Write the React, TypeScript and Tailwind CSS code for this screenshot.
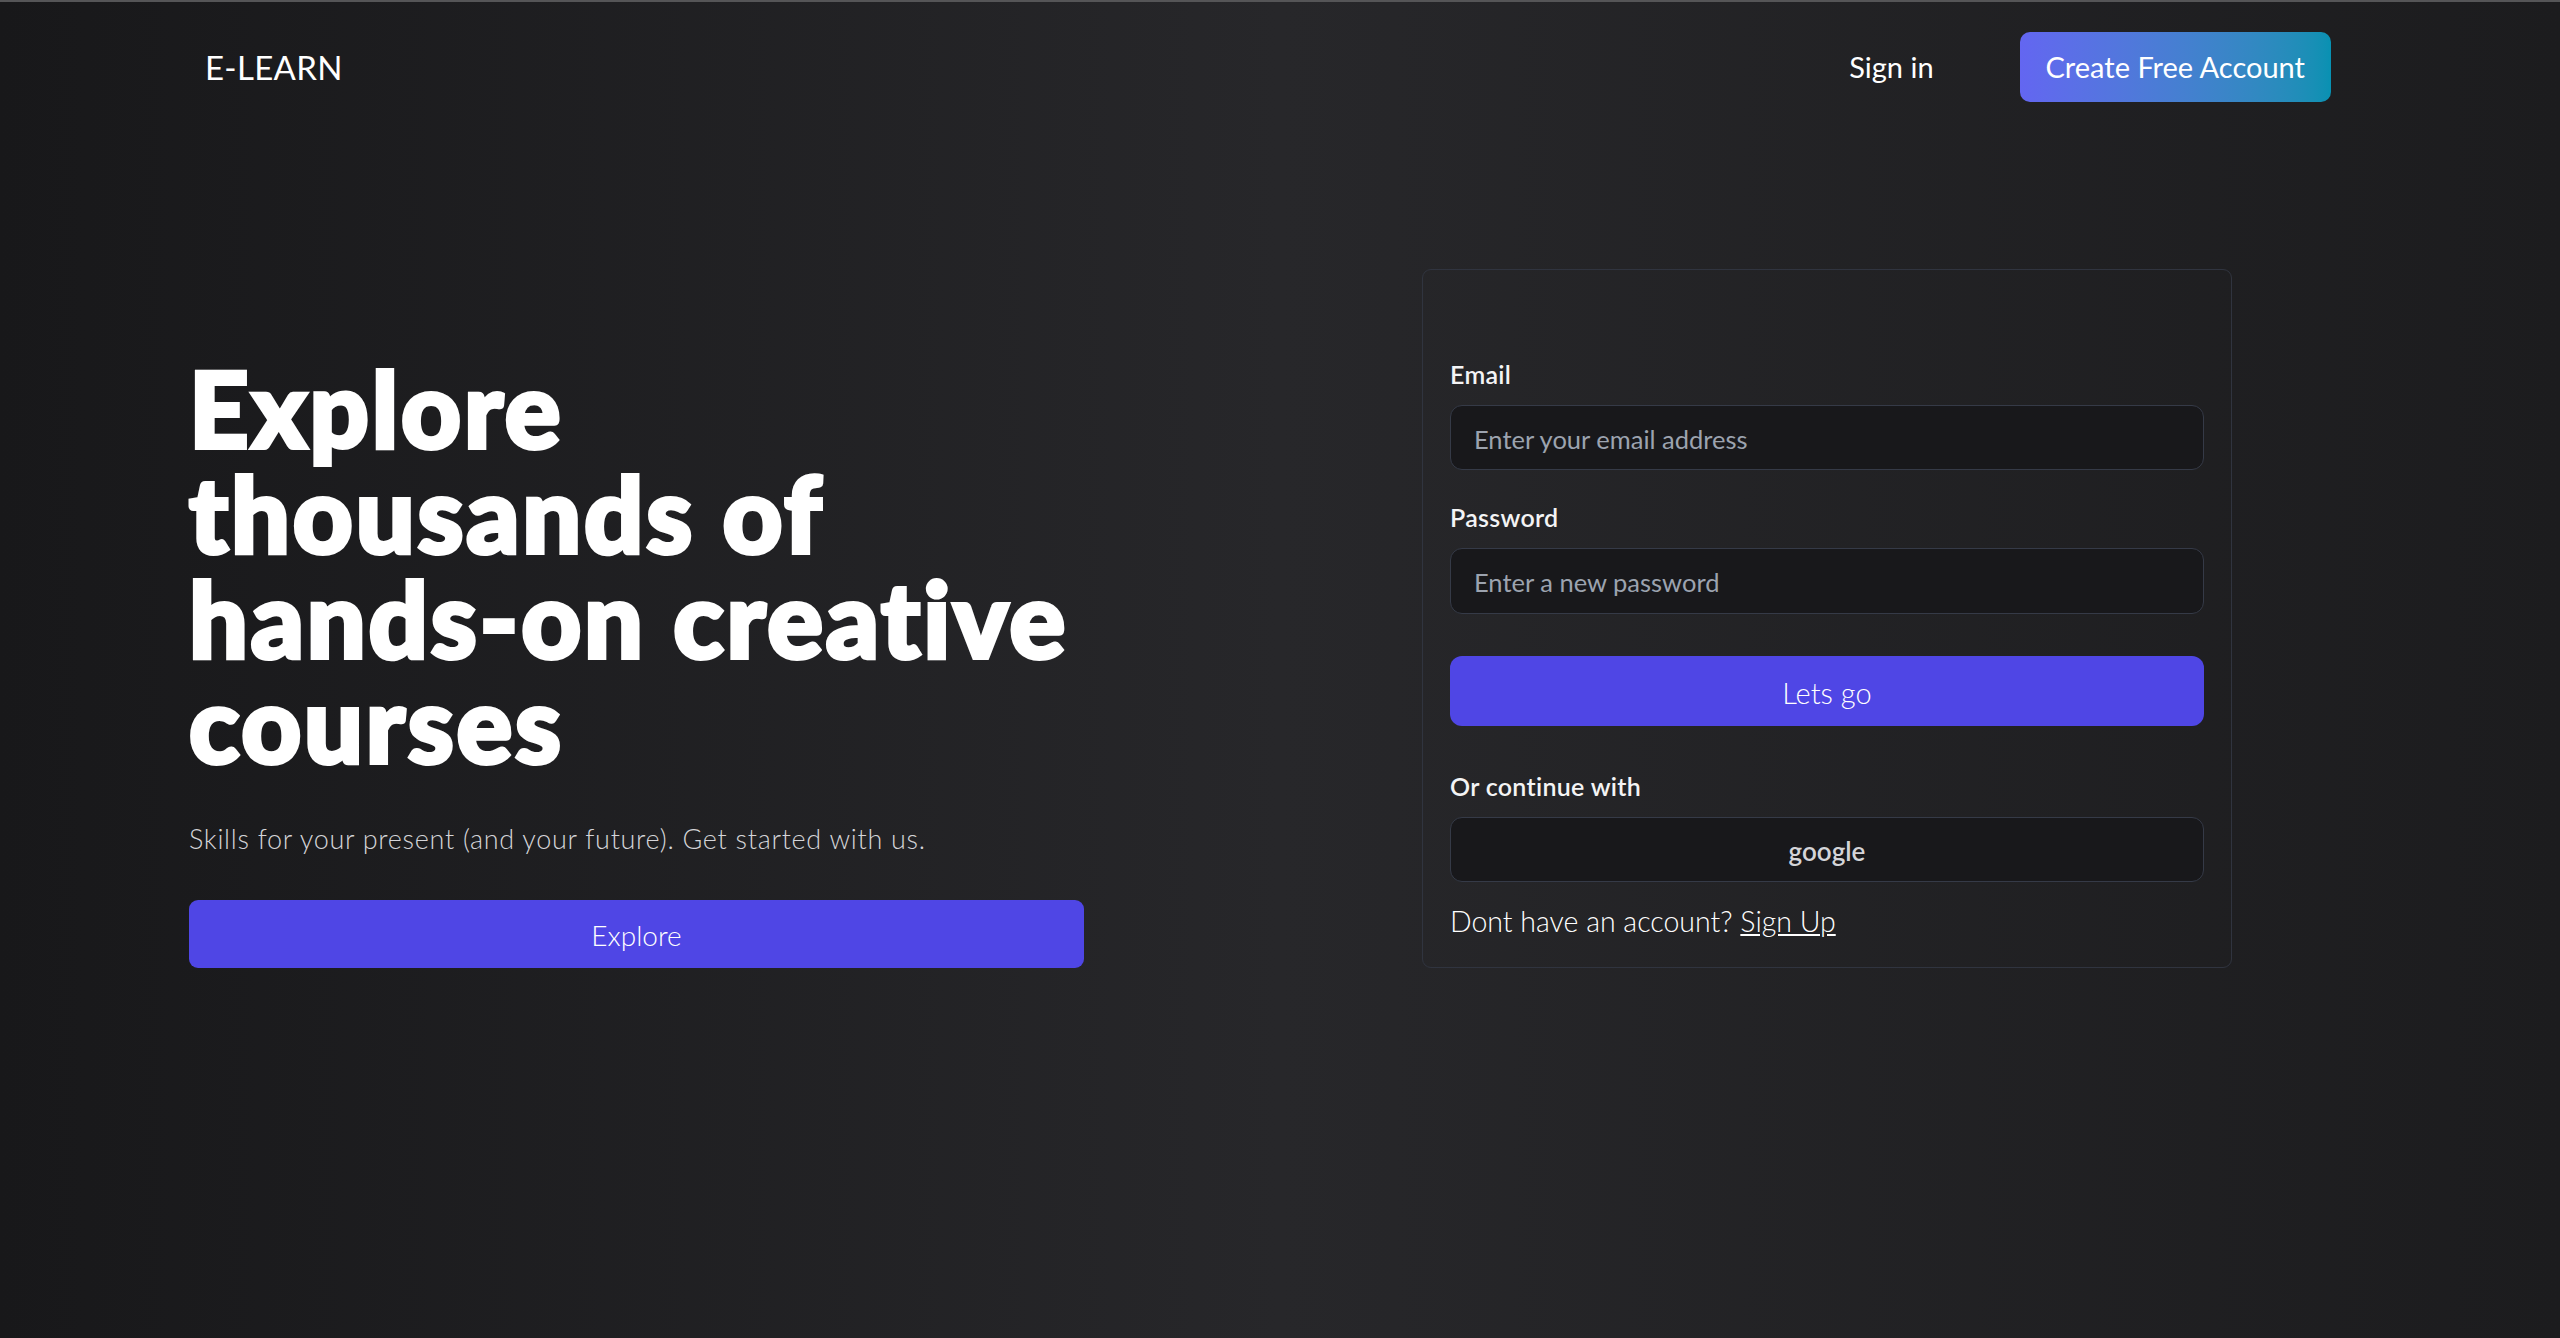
export default function App() {
  return (
    <div className="min-h-screen bg-linear-to-r from-[#18181a] via-[#27272a] to-[#1c1c1e] font-['Lato',sans-serif] text-white">
      <div className="h-[2px] bg-[#555557]" />

      <nav className="flex h-[130px] items-center justify-between pl-[205px] pr-[229px]">
        <a className="text-[33px] leading-[48px] tracking-[0.3px]" href="#">
          E-LEARN
        </a>
        <div className="flex items-center gap-[86px]">
          <a className="text-[29px] leading-[42px]" href="#">
            Sign in
          </a>
          <a
            className="flex h-[70px] items-center rounded-[10px] bg-linear-to-r from-[#6366f1] to-[#0891b2] px-[26px] text-[29px] leading-[42px]"
            href="#"
          >
            Create Free Account
          </a>
        </div>
      </nav>

      <main className="flex items-end pl-[189px] pt-[137px]">
        <div className="flex w-[895px] flex-col">
          <h1 className="text-[104px] font-black leading-[105px] tracking-[2.8px] [-webkit-text-stroke:4px_white] [paint-order:stroke_fill]">
            <span className="block">Explore</span>
            <span className="block">thousands of</span>
            <span className="block">hands-on creative</span>
            <span className="block">courses</span>
          </h1>
          <p className="mt-[43px] text-[27px] font-light leading-[42px] tracking-[0.7px] text-[#d4d4d8]">
            Skills for your present (and your future). Get started with us.
          </p>
          <button className="mt-[40px] h-[68px] w-full rounded-[9px] bg-[#4f46e5] pt-[2px] text-[28px] font-light">
            Explore
          </button>
        </div>

        <section className="ml-[338px] w-[810px] rounded-[9px] border border-[#30343f] px-[27px] pb-[25px] pt-[86px]">
          <form className="flex flex-col">
            <label className="text-[25px] font-semibold leading-[36px] tracking-[0.3px] text-[#f4f4f5]">Email</label>
            <input
              className="mt-[13px] h-[65px] w-full rounded-[12px] border border-[#353a47] bg-[#18181b] px-[23px] pt-[2px] text-[25.5px] outline-none placeholder:text-[#9ca3af]"
              placeholder="Enter your email address"
              type="email"
            />

            <label className="mt-[29px] text-[25px] font-semibold leading-[36px] tracking-[0.3px] text-[#f4f4f5]">
              Password
            </label>
            <input
              className="mt-[13px] h-[66px] w-full rounded-[12px] border border-[#353a47] bg-[#18181b] px-[23px] pt-[2px] text-[25.5px] outline-none placeholder:text-[#9ca3af]"
              placeholder="Enter a new password"
              type="password"
            />

            <button
              className="mt-[42px] h-[70px] w-full rounded-[12px] bg-[#4f46e5] pt-[3px] text-[29px] font-light"
              type="button"
            >
              Lets go
            </button>

            <p className="mt-[42px] text-[25px] font-semibold leading-[36px] tracking-[0.3px] text-[#f4f4f5]">
              Or continue with
            </p>
            <button
              className="mt-[13px] h-[65px] w-full rounded-[12px] border border-[#353a47] bg-[#18181b] pt-[3px] text-[26px] font-semibold text-[#d4d4d8]"
              type="button"
            >
              google
            </button>

            <p className="mt-[18px] text-[28.5px] font-light leading-[42px]">
              Dont have an account?{" "}
              <a className="underline" href="#">
                Sign Up
              </a>
            </p>
          </form>
        </section>
      </main>
    </div>
  );
}
